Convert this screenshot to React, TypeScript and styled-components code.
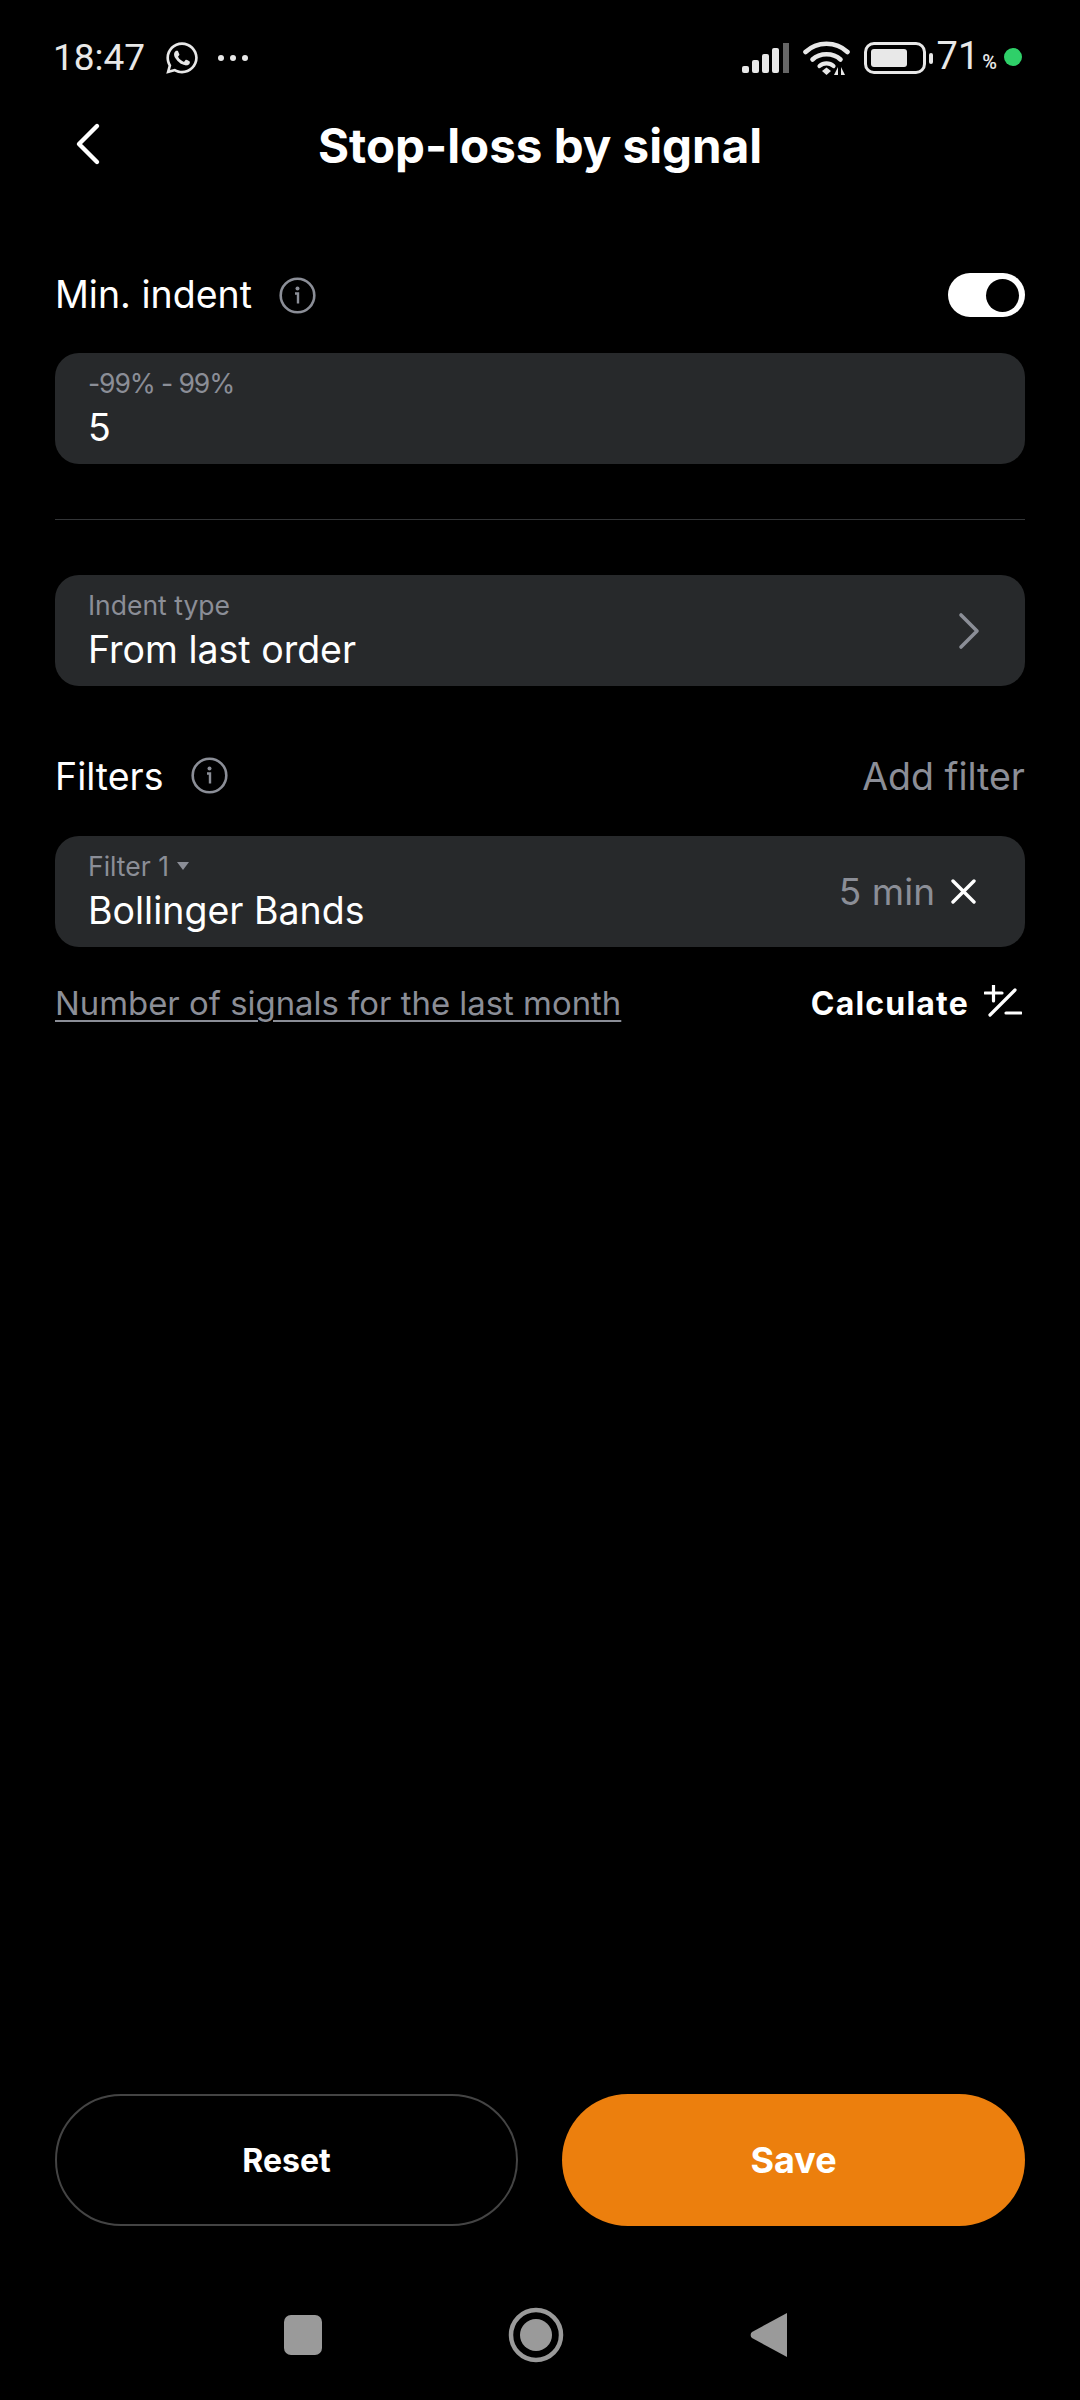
import React from 'react';
import styled, { createGlobalStyle } from 'styled-components';
import { FaWhatsapp } from 'react-icons/fa';

const GlobalStyle = createGlobalStyle`
  html, body {
    margin: 0;
    padding: 0;
    background: #000;
  }
  * {
    box-sizing: border-box;
  }
`;

const Page = styled.div`
  width: 1080px;
  height: 2400px;
  background: #000;
  color: #fff;
  font-family: Inter, 'Noto Sans', sans-serif;
  display: flex;
  flex-direction: column;
  overflow: hidden;
`;

const StatusBar = styled.div`
  height: 115px;
  padding: 38px 58px 0 53px;
  display: flex;
  justify-content: space-between;
  align-items: flex-start;
  color: #e8e8e8;
`;

const StatusGroup = styled.div`
  height: 40px;
  display: flex;
  align-items: center;
`;

const Time = styled.span`
  font-family: Roboto, sans-serif;
  font-size: 37px;
  line-height: 40px;
  width: 111px;
`;

const MoreDots = styled.svg`
  margin-left: 17px;
`;

const WifiIcon = styled.svg`
  margin-left: 13px;
`;

const BatteryIcon = styled.svg`
  margin-left: 11px;
`;

const Battery = styled.span`
  font-family: Roboto, sans-serif;
  font-size: 38px;
  line-height: 40px;
  margin: 2px 0 0 3px;
  display: inline-flex;
  align-items: baseline;
`;

const Percent = styled.span`
  font-size: 20px;
  font-weight: 500;
  margin-left: 3px;
`;

const GreenDot = styled.span`
  width: 18px;
  height: 18px;
  border-radius: 50%;
  background: #2fd069;
  margin: -2px 0 0 7px;
`;

const Header = styled.div`
  height: 62px;
  position: relative;
  display: flex;
  align-items: center;
  justify-content: center;
`;

const BackIcon = styled.svg`
  position: absolute;
  left: 70px;
  top: 6px;
`;

const Title = styled.h1`
  margin: 0;
  font-size: 47.5px;
  font-weight: 700;
  line-height: 62px;
`;

const Content = styled.div`
  padding: 0 55px;
  display: flex;
  flex-direction: column;
`;

const SectionRow = styled.div<{ $top: number }>`
  margin-top: ${({ $top }) => $top}px;
  height: 44px;
  display: flex;
  align-items: center;
  justify-content: space-between;
`;

const LabelGroup = styled.div`
  display: flex;
  align-items: center;
`;

const SectionLabel = styled.span`
  font-size: 37.5px;
  line-height: 44px;
`;

const InfoIcon = styled.svg<{ $gap: number; $lift?: number }>`
  margin-left: ${({ $gap }) => $gap}px;
  margin-top: ${({ $lift }) => -($lift ?? 0)}px;
`;

const Toggle = styled.div`
  width: 77px;
  height: 44px;
  border-radius: 22px;
  background: #fff;
  display: flex;
  align-items: center;
  justify-content: flex-end;
  padding-right: 6px;
`;

const ToggleKnob = styled.div`
  width: 33px;
  height: 33px;
  border-radius: 50%;
  background: #000;
`;

const Card = styled.div<{ $top: number }>`
  margin-top: ${({ $top }) => $top}px;
  height: 111px;
  border-radius: 24px;
  background: #27292b;
  padding: 14px 49px 0 33px;
  display: flex;
  align-items: center;
  justify-content: space-between;
`;

const CardText = styled.div`
  display: flex;
  flex-direction: column;
  margin-top: -15px;
`;

const CardLabel = styled.div<{ $tight?: boolean }>`
  font-size: 26.5px;
  line-height: 36px;
  letter-spacing: ${({ $tight }) => ($tight ? '-1.1px' : '0')};
  color: #8b8e97;
  display: flex;
  align-items: center;
`;

const Caret = styled.svg`
  margin-left: 7px;
`;

const CardValue = styled.div`
  font-size: 37.5px;
  line-height: 48px;
  margin-top: 3px;
`;

const CardAside = styled.div`
  display: flex;
  align-items: center;
  margin-top: -14px;
`;

const Chevron = styled.svg`
  margin: -14px -6px 0 0;
`;

const Duration = styled.span`
  font-size: 37px;
  color: #8b8e97;
  margin-right: 16px;
`;

const Divider = styled.div`
  height: 1px;
  background: #333537;
  margin-top: 55px;
`;

const AddFilter = styled.span`
  font-size: 37.5px;
  line-height: 44px;
  color: #8b8e97;
`;

const SignalsRow = styled.div`
  margin-top: 35px;
  display: flex;
  align-items: center;
  justify-content: space-between;
`;

const SignalsLink = styled.span`
  font-size: 32.9px;
  line-height: 40px;
  color: #8b8e97;
  text-decoration: underline;
  text-underline-offset: 5px;
  text-decoration-thickness: 2px;
`;

const Calculate = styled.div`
  display: flex;
  align-items: center;
  margin-top: 2px;
  font-size: 32px;
  line-height: 40px;
  font-weight: 700;
  letter-spacing: 1.2px;
`;

const CalculateIcon = styled.svg`
  margin: -6px 3px 0 15px;
`;

const Actions = styled.div`
  margin-top: auto;
  padding: 0 55px;
  display: grid;
  grid-template-columns: 463px 463px;
  justify-content: space-between;
`;

const ActionButton = styled.button<{ $primary?: boolean }>`
  height: 132px;
  border-radius: 66px;
  border: ${({ $primary }) => ($primary ? 'none' : '2px solid #444')};
  background: ${({ $primary }) => ($primary ? '#ec7f0d' : 'transparent')};
  color: #fff;
  font-family: inherit;
  font-weight: 700;
  font-size: ${({ $primary }) => ($primary ? 36 : 32)}px;
`;

const NavBar = styled.div`
  height: 174px;
  padding-top: 81px;
  display: flex;
  align-items: flex-start;
  justify-content: center;
`;

const NavIcons = styled.svg`
  display: block;
  margin-left: -3px;
`;

const Info = ({ gap, lift }: { gap: number; lift?: number }) => (
  <InfoIcon $gap={gap} $lift={lift} width="37" height="37" viewBox="0 0 37 37" fill="none">
    <circle cx="18.5" cy="18.5" r="16.8" stroke="#8b8e97" strokeWidth="2.6" />
    <circle cx="18.5" cy="11.5" r="2" fill="#8b8e97" />
    <path d="M16 16.5h3v10" stroke="#8b8e97" strokeWidth="2.4" />
  </InfoIcon>
);

const App: React.FC = () => {
  return (
    <Page>
      <GlobalStyle />
      <StatusBar>
        <StatusGroup>
          <Time>18:47</Time>
          <FaWhatsapp size={36} />
          <MoreDots width="32" height="8" viewBox="0 0 32 8" fill="currentColor">
            <circle cx="4" cy="4" r="3" />
            <circle cx="16" cy="4" r="3" />
            <circle cx="28" cy="4" r="3" />
          </MoreDots>
        </StatusGroup>
        <StatusGroup>
          <svg width="48" height="32" viewBox="0 0 48 32" fill="#e8e8e8">
            <rect x="0" y="24" width="7" height="7" rx="2" />
            <rect x="10" y="18" width="7" height="13" rx="2" />
            <rect x="20" y="12" width="7" height="19" rx="2" />
            <rect x="30" y="6" width="7" height="25" rx="2" />
            <rect x="41" y="1" width="6" height="30" fill="#666" />
          </svg>
          <WifiIcon width="50" height="36" viewBox="0 0 50 36" fill="none">
            <path d="M2.5 12C14 1 33 1 44.5 12" stroke="#e8e8e8" strokeWidth="4.6" strokeLinecap="round" />
            <path d="M9.5 19.5C17 12.5 30 12.5 37.5 19.5" stroke="#e8e8e8" strokeWidth="4.6" strokeLinecap="round" />
            <path d="M16.5 26c4-3.5 10-3.5 14 0" stroke="#e8e8e8" strokeWidth="4.2" strokeLinecap="round" />
            <path d="M19 31l4.5-3.5L28 31l-4.5 4z" fill="#e8e8e8" />
            <path d="M35 35v-8l-4 8zM38 35v-8l4 8z" fill="#e8e8e8" />
          </WifiIcon>
          <BatteryIcon width="70" height="32" viewBox="0 0 70 32" fill="none">
            <rect x="1.5" y="1.5" width="59" height="29" rx="8.5" stroke="#e8e8e8" strokeWidth="3" />
            <rect x="7" y="7" width="36" height="18" rx="3" fill="#e8e8e8" />
            <rect x="65" y="11" width="4" height="11" rx="2" fill="#e8e8e8" />
          </BatteryIcon>
          <Battery>
            71<Percent>%</Percent>
          </Battery>
          <GreenDot />
        </StatusGroup>
      </StatusBar>

      <Header>
        <BackIcon width="32" height="46" viewBox="0 0 32 46" fill="none">
          <path d="M27 5 9 23l18 18" stroke="#fff" strokeWidth="4.4" strokeLinecap="round" strokeLinejoin="round" />
        </BackIcon>
        <Title>Stop-loss by signal</Title>
      </Header>

      <Content>
        <SectionRow $top={96}>
          <LabelGroup>
            <SectionLabel>Min. indent</SectionLabel>
            <Info gap={27} />
          </LabelGroup>
          <Toggle>
            <ToggleKnob />
          </Toggle>
        </SectionRow>

        <Card $top={36}>
          <CardText>
            <CardLabel $tight>-99% - 99%</CardLabel>
            <CardValue>5</CardValue>
          </CardText>
        </Card>

        <Divider />

        <Card $top={55}>
          <CardText>
            <CardLabel>Indent type</CardLabel>
            <CardValue>From last order</CardValue>
          </CardText>
          <Chevron width="24" height="38" viewBox="0 0 24 38" fill="none">
            <path d="M3 3l16 16L3 35" stroke="#8b8e97" strokeWidth="3.6" strokeLinecap="round" strokeLinejoin="round" />
          </Chevron>
        </Card>

        <SectionRow $top={69}>
          <LabelGroup>
            <SectionLabel>Filters</SectionLabel>
            <Info gap={27} lift={4} />
          </LabelGroup>
          <AddFilter>Add filter</AddFilter>
        </SectionRow>

        <Card $top={37}>
          <CardText>
            <CardLabel>
              Filter 1
              <Caret width="14" height="10" viewBox="0 0 14 10" fill="#8b8e97">
                <path d="M1 1h12L7 9z" />
              </Caret>
            </CardLabel>
            <CardValue>Bollinger Bands</CardValue>
          </CardText>
          <CardAside>
            <Duration>5 min</Duration>
            <svg width="25" height="25" viewBox="0 0 25 25" fill="none">
              <path d="M2 2l21 21M23 2 2 23" stroke="#fff" strokeWidth="3.4" strokeLinecap="round" />
            </svg>
          </CardAside>
        </Card>

        <SignalsRow>
          <SignalsLink>Number of signals for the last month</SignalsLink>
          <Calculate>
            Calculate
            <CalculateIcon width="38" height="32" viewBox="0 0 38 32" fill="none">
              <path d="M1 8h17M9.5 0v16M6 30 31 5M22 28h15" stroke="#fff" strokeWidth="3.2" strokeLinecap="round" />
            </CalculateIcon>
          </Calculate>
        </SignalsRow>
      </Content>

      <Actions>
        <ActionButton>Reset</ActionButton>
        <ActionButton $primary>Save</ActionButton>
      </Actions>

      <NavBar>
        <NavIcons width="510" height="56" viewBox="0 0 510 56" fill="#9a9a9a">
          <rect x="0" y="8" width="38" height="40" rx="7" />
          <circle cx="252" cy="28" r="25" fill="none" stroke="#9a9a9a" strokeWidth="4.5" />
          <circle cx="252" cy="28" r="16" />
          <path d="M503 6v44L468 31a4 4 0 0 1 0-6z" />
        </NavIcons>
      </NavBar>
    </Page>
  );
};

export default App;
